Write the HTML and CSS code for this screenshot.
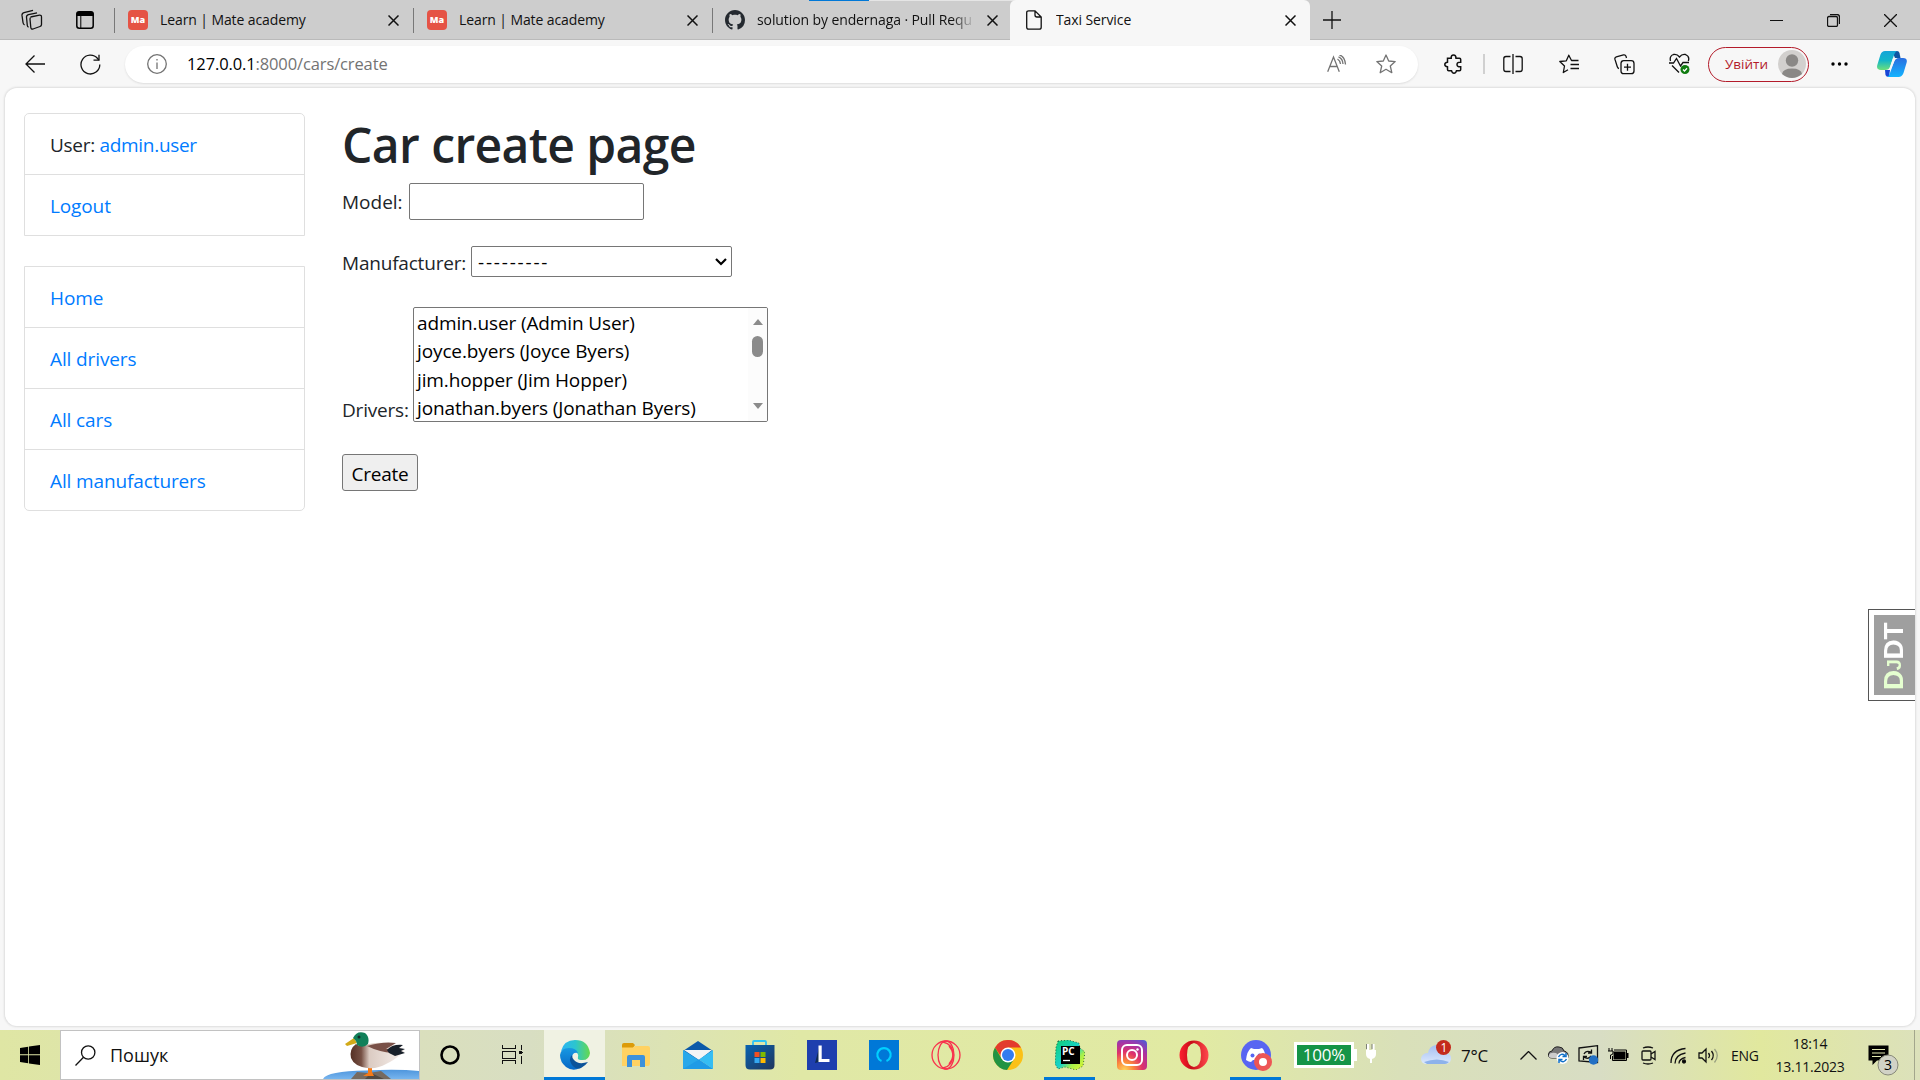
FILE: index.html
```
<!DOCTYPE html>
<html lang="uk">
<head>
<meta charset="utf-8">
<title>Taxi Service</title>
<link rel="stylesheet" href="styles.css">
</head>
<body>
<div class="window">
  <header class="tabbar">
    <div class="progress"></div>
    <div class="tools">
      <div class="slot w64"><svg width="22" height="22" viewBox="0 0 22 22" class="line"><path d="M9.500 8 18.500 6.200Q20.500 6 20.500 8V15.500Q20.500 17 19 17.500L12 20Q10 20.500 9.800 18.500L9 10Q8.900 8.600 10.500 8"/><path d="M16 3.800 7.500 5.600Q5.300 6.200 5.500 8.300L6.300 16.500M12 1.300 3 3.700Q.8 4.300 1 6.400L2 13.500Q2.200 15.300 3.600 15.800M6.300 16.500Q6.500 17.800 7.600 18"/></svg></div>
      <div class="slot w42"><svg width="18" height="18" viewBox="0 0 18 18"><rect x=".8" y=".8" width="16.400" height="16.400" rx="2.500" fill="none" stroke="#000" stroke-width="1.500"/><path d="M.5 3Q.5.5 3 .5H15Q17.500.5 17.500 3V5H.5Z"/><path d="M4.800 5V17" stroke="#000"/></svg></div>
    </div>
    <div class="tab"><span class="ma">Ma</span><span class="tabtext">Learn | Mate academy</span><svg class="x" viewBox="0 0 11 11"><path d="M.5.5 10.500 10.500M10.500.5.5 10.500"/></svg></div>
    <div class="tab"><span class="ma">Ma</span><span class="tabtext">Learn | Mate academy</span><svg class="x" viewBox="0 0 11 11"><path d="M.5.5 10.500 10.500M10.500.5.5 10.500"/></svg></div>
    <div class="tab github"><svg width="20" height="20" viewBox="0 0 16 16" fill="#24292f"><path d="M8 0C3.580 0 0 3.580 0 8c0 3.540 2.290 6.530 5.470 7.590.4.070.55-.17.55-.38 0-.19-.01-.82-.01-1.490-2.010.37-2.530-.49-2.690-.94-.09-.23-.48-.94-.82-1.130-.28-.15-.68-.52-.01-.53.63-.01 1.080.58 1.230.82.72 1.210 1.870.87 2.330.66.070-.52.28-.87.51-1.070-1.780-.2-3.640-.89-3.640-3.950 0-.87.31-1.590.82-2.150-.08-.2-.36-1.020.08-2.120 0 0 .67-.21 2.200.82.64-.18 1.320-.27 2-.27s1.360.09 2 .27c1.530-1.040 2.200-.82 2.200-.82.44 1.100.16 1.920.08 2.120.51.56.82 1.270.82 2.150 0 3.070-1.870 3.750-3.650 3.950.29.25.54.73.54 1.480 0 1.070-.01 1.930-.01 2.200 0 .21.15.46.55.38A8 8 0 0 0 16 8c0-4.420-3.580-8-8-8"/></svg><span class="tabtext fade">solution by endernaga · Pull Requ</span><svg class="x" viewBox="0 0 11 11"><path d="M.5.5 10.500 10.500M10.500.5.5 10.500"/></svg></div>
    <div class="tab active"><svg width="20" height="20" viewBox="0 0 20 20" class="line doc"><path d="M4.700.8H11L17.200 7V17.200Q17.200 19.200 15.200 19.200H4.700Q2.700 19.200 2.700 17.200V2.800Q2.700.8 4.700.8ZM11 .8V5Q11 7 13 7H17"/></svg><span class="tabtext">Taxi Service</span><svg class="x" viewBox="0 0 11 11"><path d="M.5.5 10.500 10.500M10.500.5.5 10.500"/></svg></div>
    <div class="slot w44"><svg width="18" height="18" class="line"><path d="M9 0V18M0 9H18"/></svg></div>
    <div class="controls">
      <div class="slot"><svg width="13" height="13" class="line crisp"><path d="M0 6.500H13"/></svg></div>
      <div class="slot"><svg width="13" height="13" class="line"><rect x=".5" y="2.500" width="10" height="10" rx="1.500"/><path d="M3 .5H10Q12.500.5 12.500 3V10"/></svg></div>
      <div class="slot"><svg width="13" height="13" class="line"><path d="M0 0 13 13M13 0 0 13"/></svg></div>
    </div>
  </header>

  <nav class="toolbar">
    <div class="slot w70"><svg width="20" height="18" class="line"><path d="M20 9H1M9.500.5 1 9 9.500 17.500"/></svg></div>
    <div class="slot reload"><svg width="21" height="21" viewBox="0 0 21 21" class="line"><path d="M19.800 10.500A9.400 9.400 0 1 1 17.600 4.500L18.800 6"/><path d="M19 .8V6.200H13.500"/></svg></div>
    <div class="address">
      <svg width="20" height="20" class="line gray"><circle cx="10" cy="10" r="9.300"/><path d="M10 8.500V15M10 5V6.500"/></svg>
      <span class="url"><b>127.0.0.1</b>:8000/cars/create</span>
      <svg width="20" height="18" viewBox="0 0 20 18" class="line gray aloud"><path d="M.7 16.700 6.500 2 12.300 16.700M2.700 11.500H10.300M10.500 4Q13 5.500 13.500 9M11.500 1.800Q15.700 3.500 16 9M12.500 0Q18 1.500 18.500 9.500"/></svg>
      <svg width="20" height="20" viewBox="0 0 20 20" class="line gray"><path d="M10 1 12.700 7 19.200 7.600 14.300 12 15.800 18.700 10 15.300 4.200 18.700 5.700 12 .8 7.600 7.300 7Z" stroke-linejoin="round"/></svg>
    </div>
    <div class="slot w72"><svg width="20" height="20" viewBox="0 0 20 20" class="line"><path d="M3.500 4.200H7.200Q7 1 9.500 1T12 4.200H15.500Q16.700 4.200 16.700 5.400V8.300Q13 8 13 10.500T16.700 12.700V15.500Q16.700 16.700 15.500 16.700H12.500Q12 19.200 10 19.200T7.500 16.700H4.700Q3.500 16.700 3.500 15.500V12.800Q.8 12.500.8 10.500T3.500 8.200Z" stroke-width="1.500"/></svg></div>
    <span class="divider"></span>
    <div class="slot w56"><svg width="20" height="20" viewBox="0 0 20 20" class="line"><path d="M7.500 2.500H3Q.8 2.500.8 4.700V15.300Q.8 17.500 3 17.500H7.500M12.500 2.500H17Q19.200 2.500 19.200 4.700V15.300Q19.200 17.500 17 17.500H12.500M10 0V20"/></svg></div>
    <div class="slot w56"><svg width="20" height="20" viewBox="0 0 20 20" class="line"><path d="M19.500 6.500H12.500L9.800 1.200 7.300 6.800.8 7.500 5.500 12 4.300 18.500 9 15.700M11.500 10.500H20M11.500 14.500H20" stroke-linejoin="round"/></svg></div>
    <div class="slot w55"><svg width="21" height="21" viewBox="0 0 21 21" class="line"><path d="M5 14.500Q3.800 14.300 3.300 12.800L.9 5.200Q.5 3.500 2.300 2.800L9.500.9Q11.400.5 12 2.200L12.500 4"/><rect x="7" y="6.700" width="13" height="13" rx="2.800"/><path d="M13.500 9.700V16.700M10 13.200H17"/></svg></div>
    <div class="slot w55"><svg width="21" height="22" viewBox="0 0 21 22" class="line"><path d="M1.500 8Q.2 3 4.500 1.500 8 .7 10.500 4 13 .7 16.500 1.500 21 3.500 19.300 8M0 10H4.500L7.500 5.500 11.500 13 14 9.500H20M3 12.500 10 19.500"/><circle cx="16" cy="16.500" r="4.500" fill="#107c10" stroke="none"/><path d="M14 16.500 15.500 18 18 15.200" stroke="#fff"/></svg></div>
    <div class="signin"><span>Увійти</span><svg width="28" height="28" viewBox="0 0 28 28"><circle cx="14" cy="14" r="14" fill="#d2d0ce"/><circle cx="14" cy="10.500" r="6.200" fill="#8a8886"/><path d="M4 24Q5 18.500 14 18.500T24 24Q19 28 14 28T4 24Z" fill="#8a8886"/></svg></div>
    <div class="slot w60"><svg width="17" height="4"><circle cx="2" cy="2" r="1.700"/><circle cx="8.500" cy="2" r="1.700"/><circle cx="15" cy="2" r="1.700"/></svg></div>
    <div class="slot w46"><svg width="30" height="28" viewBox="0 0 30 28"><defs><linearGradient id="ca" x1="0" y1="0" x2="0" y2="1"><stop offset="0" stop-color="#14a4d8"/><stop offset=".5" stop-color="#13b6c9"/><stop offset="1" stop-color="#6de07a"/></linearGradient><linearGradient id="cb" x1="0" y1="0" x2="0" y2="1"><stop offset="0" stop-color="#2a6ee0"/><stop offset="1" stop-color="#13b4ff"/></linearGradient></defs><path d="M15 1H20Q22 1 22.500 3L23.500 8H18Z" fill="#0d55a3"/><path d="M8 1H20Q18 2 17 5L13 17Q12 20 8 20H4Q-1 20 .3 15L3.500 4.500Q4.800 1 8 1Z" fill="url(#ca)"/><path d="M8 20H13L12 27Q9 27 8.500 25Z" fill="#1745d6"/><path d="M22 8H26Q31 8 29.500 13L26.500 23Q25 27 21.500 27H10Q12 26.500 13 23L17 12Q18 8 22 8Z" fill="url(#cb)"/><path d="M17 8H20Q18 9 17 12L13.500 20H11Q12.500 19 13 17L16 8Z" fill="#f7f7f7"/></svg></div>
  </nav>

  <main class="page">
    <aside class="sidebar">
      <ul class="group top">
        <li class="user">User: <a>admin.user</a></li>
        <li><a>Logout</a></li>
      </ul>
      <ul class="group bottom">
        <li><a>Home</a></li>
        <li><a>All drivers</a></li>
        <li><a>All cars</a></li>
        <li><a>All manufacturers</a></li>
      </ul>
    </aside>
    <section class="content">
      <h1>Car create page</h1>
      <form>
        <div class="row model"><label for="model">Model:</label><input id="model" type="text"></div>
        <div class="row maker"><label for="maker">Manufacturer:</label>
          <div class="select"><select id="maker"><option>---------</option></select><svg width="12" height="8" viewBox="0 0 12 8"><path d="M1 1 6 6 11 1" fill="none" stroke="#000" stroke-width="2.200"/></svg></div>
        </div>
        <div class="row drivers"><label>Drivers:</label>
          <div class="listbox">
            <ul><li>admin.user (Admin User)</li><li>joyce.byers (Joyce Byers)</li><li>jim.hopper (Jim Hopper)</li><li>jonathan.byers (Jonathan Byers)</li></ul>
            <div class="scroll"><i class="up"></i><i class="thumb"></i><i class="down"></i></div>
          </div>
        </div>
        <button type="button">Create</button>
      </form>
    </section>
    <div class="djdt"><div><span class="dj">D<small>J</small></span>DT</div></div>
  </main>

  <footer class="taskbar">
    <div class="slot w60"><svg width="20" height="20" viewBox="0 0 20 20"><path d="M0 3 8.200 1.700V9.300H0ZM9 1.600 20 0V9.300H9ZM0 10.200H8.200V18.300L0 17ZM9 10.200H20V20L9 18.400Z"/></svg></div>
    <div class="search">
      <svg width="21" height="21" viewBox="0 0 21 21" class="line"><circle cx="13.200" cy="7.500" r="6.700"/><path d="M8.500 12.300.5 20.500"/></svg>
      <span>Пошук</span>
      <svg width="96" height="48" viewBox="0 0 96 48" class="duck"><defs><linearGradient id="body" x1="0" x2="1"><stop offset="0" stop-color="#553024"/><stop offset=".2" stop-color="#765044"/><stop offset=".35" stop-color="#dbcbc2"/><stop offset="1" stop-color="#f7f0ed"/></linearGradient><linearGradient id="water" x1="0" y1="0" x2="0" y2="1"><stop offset="0" stop-color="#4f96dd"/><stop offset="1" stop-color="#78b5ee"/></linearGradient></defs><path d="M0 48Q4 40 43 39.500Q75 38 96 40V48Z" fill="url(#water)"/><path d="M28 48 34 41 46 42 58 40 68 48Z" fill="#766a60"/><path d="M42 48 48 42 61 48Z" fill="#514942"/><path d="M45 36H49V41L51 45 40 45 45 42Z" fill="#f37a19"/><path d="M33 13Q38 17 46 13 60 10 72 14 82 17 81 21 70 30 63 33 55 38 44 37 31 35 28 27 26 18 33 13Z" fill="url(#body)"/><path d="M44 15Q60 10 73 12L63 18Q70 18 76 16L70 22Q56 21 44 15Z" fill="#795047"/><path d="M64 19Q69 13 80 14L76 17 82 18 78 20 82 22 72 25 66 22Z" fill="#18202a"/><path d="M31 7 22 13 24 15 34 12Z" fill="#d2aa18"/><path d="M30 7Q34-1 42 2 47 6 45 13 40 18 34 14 34 10 30 7Z" fill="#11805a"/><circle cx="36" cy="6" r="1.500" fill="#102b27"/></svg>
    </div>
    <div class="slot w60"><svg width="20" height="20"><circle cx="10" cy="10" r="8.500" fill="none" stroke="#000" stroke-width="2.600"/></svg></div>
    <div class="slot w64 view"><svg width="21" height="20" class="line crisp"><path d="M.5 0V3.500H13V0M.5 19V15.500H13V19M.5 6H13V13.500H.5ZM19 0V5M19 11V19M17.500 7.500H20.500" /><rect x="17.500" y="6.500" width="2" height="2" fill="#000"/></svg></div>
    <div class="app current"><svg width="30" height="30" viewBox="0 0 30 30"><defs><linearGradient id="ea"><stop offset="0" stop-color="#2bb4f4"/><stop offset=".5" stop-color="#2cc5ce"/><stop offset="1" stop-color="#66d94c"/></linearGradient><linearGradient id="eb" x1="0" y1="0" x2="0" y2="1"><stop offset="0" stop-color="#1798e2"/><stop offset="1" stop-color="#0767c5"/></linearGradient></defs><path d="M1 11Q4 0 15 0 28 0 30 13 29 21 21 20 17 20 18 17 19 14 15 11 9 8 1 11Z" fill="url(#ea)"/><path d="M0 15Q1 8 9 8 16 8 18 13 12 12 12 18 13 25 20 28 13 32 6 27 0 22 0 15Z" fill="url(#eb)"/><path d="M12 15Q8 19 12 25 16 30 21 28 26 25 28 22 18 25 14 20 12 18 12 15Z" fill="#0c539a"/></svg></div>
    <div class="app"><svg width="28" height="24" viewBox="0 0 28 24"><path d="M0 2Q0 0 2 0H11L13 2 11 5H0Z" fill="#dc9b09"/><path d="M0 4.500H11L13 3H26Q28 3 28 5V20Q28 23 26 23H0Z" fill="#ffd262"/><path d="M5 24V14Q5 12 7 12H21Q23 12 23 14V24H18V17H10V24Z" fill="#3d91db"/></svg></div>
    <div class="app"><svg width="30" height="28" viewBox="0 0 30 28"><path d="M0 10 15 0 30 10 15 20Z" fill="#0b5aa9"/><path d="M1 9H29L16 19Z" fill="#f3f4f6"/><path d="M0 9 30 28H0Z" fill="#28a8ea"/><path d="M30 9 16 18.500 30 28Z" fill="#35bdf3"/><path d="M0 28 16 18.500 30 28Z" fill="#1f9be6"/></svg></div>
    <div class="app"><svg width="30" height="30" viewBox="0 0 30 30"><defs><linearGradient id="st" x2="1" y2="1"><stop stop-color="#0864b2"/><stop offset="1" stop-color="#21365c"/></linearGradient></defs><path d="M8 6V2Q8 1 9 1H20Q21 1 21 2V6" fill="none" stroke="#2fc4f5" stroke-width="1.800"/><path d="M.5 5H29.500V25Q29.500 29.500 25 29.500H5Q.5 29.500.5 25Z" fill="url(#st)"/><path d="M9.500 12H14.500V17H9.500Z" fill="#f25022"/><path d="M15.500 12H20.500V17H15.500Z" fill="#7fba00"/><path d="M9.500 18H14.500V23H9.500Z" fill="#35a8f0"/><path d="M15.500 18H20.500V23H15.500Z" fill="#ffb900"/></svg></div>
    <div class="app"><svg width="30" height="30"><path d="M0 0H30V30H0Z" fill="#1e3fae"/><path d="M8 23 12 8V22Z" fill="#102c53"/><path d="M11.500 5.500H14.700V19H22.500V22H11.500Z" fill="#fff"/></svg></div>
    <div class="app"><svg width="30" height="30"><path d="M0 0H30V30H0Z" fill="#0078d7"/><path d="M12.500 21A6.700 6.700 0 1 1 17.500 21" fill="none" stroke="#00d0ff" stroke-width="2.200"/></svg></div>
    <div class="app"><svg width="30" height="30" fill="none" stroke="#f8324d" stroke-width="1.300"><circle cx="15" cy="15" r="14"/><ellipse cx="15" cy="15" rx="8" ry="14"/><path d="M12 2Q22 4 22 15T12 28"/><path d="M18 6Q26 15 18 24"/></svg></div>
    <div class="app"><svg width="30" height="30" viewBox="0 0 30 30"><circle cx="15" cy="15" r="15" fill="#fbc116"/><path d="M2 7.500A15 15 0 0 1 28 7.500H15L9 18Z" fill="#e33b2e"/><path d="M2 7.500A15 15 0 0 0 14 30L21 19 15 22 8.500 18.500Z" fill="#229342"/><circle cx="15" cy="15" r="7.500" fill="#fff"/><circle cx="15" cy="15" r="6" fill="#347cf0"/></svg></div>
    <div class="app running"><svg width="30" height="30" viewBox="0 0 30 30"><defs><linearGradient id="py" x2="1" y2="1"><stop stop-color="#10cf75"/><stop offset=".5" stop-color="#17d3ca"/><stop offset=".7" stop-color="#a5ef4c"/><stop offset="1" stop-color="#edf82c"/></linearGradient></defs><path d="M3 1 13 0 24 3 25 8 30 12 28 26 21 30 10 27 3 29 0 24 1 7Z" fill="url(#py)" stroke="#184531" stroke-width=".8" stroke-dasharray="1 2"/><path d="M6 6H25V24H6Z"/><text x="7" y="15" class="pc">PC</text><path d="M8 20.500H15" stroke="#fff" stroke-width="1.300"/></svg></div>
    <div class="app"><svg width="30" height="30" viewBox="0 0 30 30"><defs><radialGradient id="ig" cx=".25" cy="1" r="1.200"><stop stop-color="#ffd45b"/><stop offset=".25" stop-color="#fb883c"/><stop offset=".5" stop-color="#df3269"/><stop offset=".75" stop-color="#a633a5"/><stop offset="1" stop-color="#505bd5"/></radialGradient></defs><rect width="30" height="30" rx="4" fill="url(#ig)"/><g fill="none" stroke="#fff" stroke-width="2"><rect x="5" y="5" width="20" height="20" rx="5"/><circle cx="15" cy="15" r="5"/></g><circle cx="20.500" cy="9.500" r="1.200" fill="#fff"/></svg></div>
    <div class="app"><svg width="30" height="30" viewBox="0 0 30 30"><defs><linearGradient id="op"><stop stop-color="#ff2030"/><stop offset=".4" stop-color="#c70d19"/><stop offset="1" stop-color="#ff4a4d"/></linearGradient></defs><path fill-rule="evenodd" d="M15 .5A14.500 14.500 0 1 0 15 29.500A14.500 14.500 0 1 0 15 .5ZM15 3Q22 4 22 15T15 27Q8 26 8 15T15 3Z" fill="url(#op)"/></svg></div>
    <div class="app running discord"><svg width="31" height="31" viewBox="0 0 31 31"><circle cx="15" cy="15" r="15" fill="#5865f2"/><path d="M10 8 13 9H18L21 8Q24 10 25 20 22 22 20 22L18 20H12L10 22Q8 22 5 20 6 11 10 8Z" fill="#fff"/><circle cx="11.500" cy="15.500" r="2" fill="#5865f2"/><circle cx="18.500" cy="15.500" r="2" fill="#5865f2"/><circle cx="22" cy="22" r="6.500" fill="#fff" stroke="#ed5555" stroke-width="5"/></svg></div>
    <div class="charge"><span>100%</span><i></i></div>
    <svg width="12" height="19" viewBox="0 0 12 19" class="plug"><path d="M3 0V6M8.500 0V6" stroke="#fff" stroke-width="2.200"/><path d="M1.500 0V5M7 0V5" stroke="#555" stroke-width=".7"/><path d="M1 6H11V10Q11 14 7 15V19H5V15Q1 14 1 10Z" fill="#fff"/></svg>
    <div class="weather"><svg width="31" height="25" viewBox="0 0 31 25"><defs><linearGradient id="cl" x1="0" y1="0" x2="0" y2="1"><stop stop-color="#a4bff1"/><stop offset="1" stop-color="#dce9fd"/></linearGradient></defs><path d="M6 24Q0 24 0 18.500 1 13 7 13 8 6 15 5 23 5 25 13 31 14 30 19.500 29 24 24 24Z" fill="url(#cl)"/><path d="M3 22Q16 17 28 22 26 24 24 24H6Z" fill="#8db2eb"/><circle cx="22.500" cy="7.500" r="7.500" fill="#c42b1c"/><text x="19.500" y="12" class="badge">1</text></svg><span>7°C</span></div>
    <div class="tray">
      <div class="slot"><svg width="17" height="9" class="line"><path d="M.5 8.500 8.500.5 16.500 8.500"/></svg></div>
      <div class="slot"><svg width="21" height="18" viewBox="0 0 21 18"><path d="M4 12Q0 12 .5 8 1 5 4 5 6 0 11 1 15 1 16 5 21 6 20 12Z" fill="#777" stroke="#222"/><path d="M1 9Q2 6 8 7L14 12H4Q0 12 1 9Z" fill="#ccc"/><circle cx="14.500" cy="12" r="6" fill="#fff"/><path d="M10.500 11Q13 6.500 17 9.500M18.500 13Q16 17.500 12 14.500M18 7V10.500H14.500M11 17V13.500H14.500" fill="none" stroke="#0f70c9" stroke-width="1.500"/></svg></div>
      <div class="slot"><svg width="21" height="20" viewBox="0 0 21 20" class="line"><path d="M1 3 19.500.7V17.500L1 16ZM6 9Q8 5 13 7M13 11Q10 15 6 12M13.500 4.500V8H10M5.500 15V11.500H9"/><circle cx="15.500" cy="15" r="4.700" fill="#2370c4" stroke="none"/></svg></div>
      <div class="slot"><svg width="21" height="14" viewBox="0 0 21 14"><path d="M5.500 3.500H17.500V11.500H5.500Z"/><path d="M6 2H18.500V12.500H4.500V8" fill="none" stroke="#000"/><path d="M19 5H20.500V10H19Z"/><path d="M1 0V3M4 0V3M0 3H5V5Q5 7 2.500 7V11" fill="none" stroke="#000"/></svg></div>
      <div class="slot"><svg width="17" height="19" viewBox="0 0 17 19" class="line"><rect x="2" y="5" width="9" height="9" rx="1"/><path d="M11 8 15 5.500V13.500L11 11M3 2Q8 0 13 2M3 17Q8 19 13 17"/></svg></div>
      <div class="slot"><svg width="17" height="17" viewBox="0 0 17 17" class="line"><path d="M1 16Q1 3 15.500 1.500M5 16.500Q5 8 15.500 6M9 16.500Q9 12 15.500 10.500"/><circle cx="14" cy="14.500" r="1.500" fill="#000"/></svg></div>
      <div class="slot"><svg width="21" height="17" viewBox="0 0 21 17" class="line"><path d="M1 6H4L8 2V15L4 11H1ZM10.500 6Q12.500 8.500 10.500 11M13.500 4Q17 8.500 13.500 13"/><path d="M16.500 2Q22 8.500 16.500 15.500" stroke="#98a080"/></svg></div>
    </div>
    <span class="lang">ENG</span>
    <div class="clock"><span>18:14</span><span>13.11.2023</span></div>
    <div class="notice"><svg width="31" height="31" viewBox="0 0 31 31"><path d="M.5.5H20.500V15.500H9L4.500 20V15.500H.5Z"/><path d="M4 4.500H17M4 8H17M4 11.500H13" stroke="#e1e6b0" stroke-width="1.200"/><circle cx="20" cy="20" r="10" fill="#d1d2c6" stroke="#87897a"/><text x="16" y="25" class="count">3</text></svg></div>
    <i class="edge"></i>
  </footer>
</div>
</body>
</html>
```
FILE: styles.css
```
* { box-sizing: border-box; }
body { margin: 0; overflow: hidden; font-family: "Open Sans", sans-serif; color: #111; }
svg { display: block; flex: none; }
ul { list-style: none; margin: 0; padding: 0; }
.window { width: 1920px; height: 1080px; display: flex; flex-direction: column; background: #f7f7f7; }
.line { fill: none; stroke: #111; stroke-width: 1.3; }
.line.gray { stroke: #737373; }
.crisp { shape-rendering: crispEdges; stroke-width: 1; }
.slot { display: flex; align-items: center; justify-content: center; flex: none; }
.w42 { width: 42px; } .w44 { width: 44px; } .w46 { width: 46px; } .w55 { width: 55px; } .w56 { width: 56px; }
.w60 { width: 60px; } .w64 { width: 64px; } .w70 { width: 70px; } .w72 { width: 72px; }

.tabbar { position: relative; display: flex; height: 40px; flex: none; background: #cdcdcd; box-shadow: inset 0 -1px #bababa; }
.progress { position: absolute; left: 809px; top: 0; width: 301px; height: 1px; background: linear-gradient(90deg, #0078d7 60px, #e5e5e5 60px); }
.tools { display: flex; width: 114px; }
.tab { position: relative; display: flex; align-items: center; width: 299px; padding: 0 14px; flex: none; }
.tab::before { content: ""; position: absolute; left: 0; top: 8px; width: 1px; height: 25px; background: #787878; }
.tab.github { width: 298px; padding: 0 12px 0 13px; }
.tab.active { width: 300px; background: #f7f7f7; border-radius: 6px 6px 0 0; }
.tab.active::before { display: none; }
.tabtext { flex: 1; margin-left: 12px; font-size: 14px; letter-spacing: -.1px; line-height: 20px; white-space: nowrap; overflow: hidden; }
.fade { -webkit-mask-image: linear-gradient(90deg, #000 195px, transparent 218px); mask-image: linear-gradient(90deg, #000 195px, transparent 218px); }
.x { width: 11px; height: 11px; margin: 1px 0 0 8px; stroke: #111; stroke-width: 1.5; }
.ma { width: 20px; height: 20px; border-radius: 4px; background: #e55345; color: #fff; font-size: 9px; line-height: 20px; font-weight: 800; text-align: center; }
.controls { display: flex; margin-left: auto; width: 172px; }
.controls .slot { width: 57px; }

.toolbar { display: flex; height: 48px; align-items: center; flex: none; }
.reload { width: 40px; margin-right: 15px; }
.address { display: flex; align-items: center; width: 1293px; height: 37px; padding: 0 22px 0 22px; border-radius: 19px; background: #fff; box-shadow: 0 1px 2px #ddd; flex: none; }
.url { flex: 1; margin: -2px 0 0 20px; font-size: 16.500px; letter-spacing: -.12px; color: #737373; }
.url b { font-weight: 400; color: #000; }
.aloud { margin-right: 29px; }
.divider { width: 2px; height: 20px; background: #d0d0d0; margin: 0 0 0 -7px; }
.signin { display: flex; align-items: center; justify-content: space-between; width: 101px; height: 35px; padding: 0 2px 0 16px; margin-left: 1px; border: 1.500px solid #b31b2a; border-radius: 18px; color: #b31b2a; font-size: 13.500px; flex: none; }

.page { position: relative; display: flex; width: 1910px; height: 938px; margin: 0 5px 4px; padding: 25px 19px; background: #fff; border-radius: 12px; box-shadow: 0 0 2px 1px #ddd; font-size: 19px; letter-spacing: -.12px; color: #212529; flex: none; overflow: hidden; }
.sidebar { width: 281px; display: flex; flex-direction: column; gap: 30px; flex: none; }
.group { border: 1px solid #dfdfdf; }
.group.top { border-radius: 5px 5px 0 0; }
.group.bottom { border-radius: 0 0 5px 5px; }
.group li { height: 60px; line-height: 63px; padding-left: 25px; }
.group li + li { height: 61px; border-top: 1px solid #dfdfdf; }
.group .user { letter-spacing: -.3px; }
.group a { color: #007bff; }
.content { margin-left: 37px; }
h1 { margin: 0; height: 70px; line-height: 64px; font-size: 48px; font-weight: 600; letter-spacing: -.58px; }
form { display: flex; flex-direction: column; align-items: flex-start; }
.row { display: flex; }
.row label { flex: none; white-space: nowrap; letter-spacing: -.2px; }
.model { height: 37px; margin-bottom: 26px; line-height: 39px; }
.model label { width: 67px; letter-spacing: 0; }
.model input { width: 235px; height: 37px; border: 1px solid #767676; border-radius: 2px; }
.maker { height: 31px; margin-bottom: 30px; line-height: 34px; }
.maker label { width: 129px; }
.select { display: grid; width: 261px; height: 31px; }
.select > * { grid-area: 1 / 1; }
.select svg { place-self: center end; margin-right: 5px; pointer-events: none; }
.select select { appearance: none; border: 1px solid #767676; border-radius: 2px; background: #fff; color: #000; font: 19px "Open Sans", sans-serif; letter-spacing: 1.800px; padding: 1px 0 0 6px; }
.drivers { height: 115px; margin-bottom: 32px; align-items: flex-end; line-height: 24px; }
.drivers label { width: 71px; }
.listbox { display: flex; width: 355px; height: 115px; border: 1px solid #767676; border-radius: 2px; color: #000; overflow: hidden; }
.listbox ul { flex: 1; padding: 1px 0 0 3px; }
.listbox li { height: 28.300px; line-height: 29px; white-space: nowrap; }
.scroll { display: flex; flex-direction: column; align-items: center; width: 19px; padding: 11px 0 12px; background: #fcfcfc; }
.thumb { width: 11px; height: 21px; margin: 11px 0 auto; border-radius: 6px; background: #8b8b8b; }
.up, .down { border: 5.500px solid transparent; border-top: 0; border-bottom: 6px solid #8b8b8b; }
.down { border-bottom: 0; border-top: 6px solid #8b8b8b; }
button { width: 76px; height: 37px; padding: 2px 0 0; border: 1px solid #767676; border-radius: 3px; background: #efefef; color: #000; font: 19px "Open Sans", sans-serif; letter-spacing: -.2px; }
.djdt { position: absolute; right: 0; top: 521px; width: 47px; height: 92px; padding: 5px 0 5px 5px; border: 1px solid #555; border-right: 0; background: #fff; }
.djdt div { width: 41px; height: 80px; padding: 5px 0 0; background: #9f9f9f; writing-mode: vertical-rl; transform: rotate(180deg); color: #fff; font: 700 28px/39px "Liberation Sans", sans-serif; letter-spacing: -.4px; white-space: nowrap; }
.dj { color: #e5ffd0; }
.dj small { font-size: 20px; }

.taskbar { display: flex; height: 50px; align-items: center; flex: none; background: linear-gradient(90deg, #dfe6a4 0, #dadfbd 420px, #d8dec2 530px, #e0e8a6 800px, #e1eaa3 1200px, #d9e0b9 1400px, #d8ddc4 1600px, #e1e89e 1760px, #dce1bb 1920px); }
.search { display: flex; align-items: center; width: 360px; height: 50px; padding-left: 14px; border: 1px solid #c2c2c2; background: #fff; font-size: 18px; flex: none; }
.search span { margin: -1px auto 0 14px; }
.duck { align-self: flex-end; }
.app { display: flex; align-items: center; justify-content: center; width: 62px; height: 50px; flex: none; }
.app.current { width: 61px; background: #f0f2e3; border-bottom: 3px solid #0078d7; padding-top: 3px; }
.app.running { box-shadow: inset 0 -3px #0078d7; width: 51px; margin: 0 6px 0 5px; }
.discord { padding-left: 1px; }
.pc { font: 700 10px "Open Sans", sans-serif; fill: #fff; }
.charge { display: flex; align-items: center; margin-left: 7px; flex: none; }
.charge span { width: 60px; height: 26px; border: 3px solid #fff; background: #159447; color: #fff; font-size: 17px; line-height: 19px; letter-spacing: -.2px; text-align: center; }
.charge i { width: 3px; height: 12px; background: #fff; }
.plug { margin: -3px 0 0 8px; }
.weather { display: flex; align-items: center; width: 92px; margin-left: 44px; gap: 9px; font-size: 17px; letter-spacing: -.3px; flex: none; }
.weather svg { margin-top: -5px; }
.badge { font: 12px "Open Sans", sans-serif; fill: #fff; }
.tray { display: flex; width: 211px; flex: none; }
.tray .slot { width: 30.150px; }
.lang { width: 40px; margin-left: 7px; font-size: 14px; letter-spacing: -.3px; flex: none; }
.clock { display: flex; flex-direction: column; width: 78px; align-items: center; font-size: 14px; line-height: 23px; letter-spacing: -.25px; flex: none; }
.notice { margin: 10px 0 0 19px; }
.count { font: 14px "Open Sans", sans-serif; }
.edge { width: 1px; height: 50px; margin-left: auto; margin-right: 5px; background: #a3a68c; }
```
